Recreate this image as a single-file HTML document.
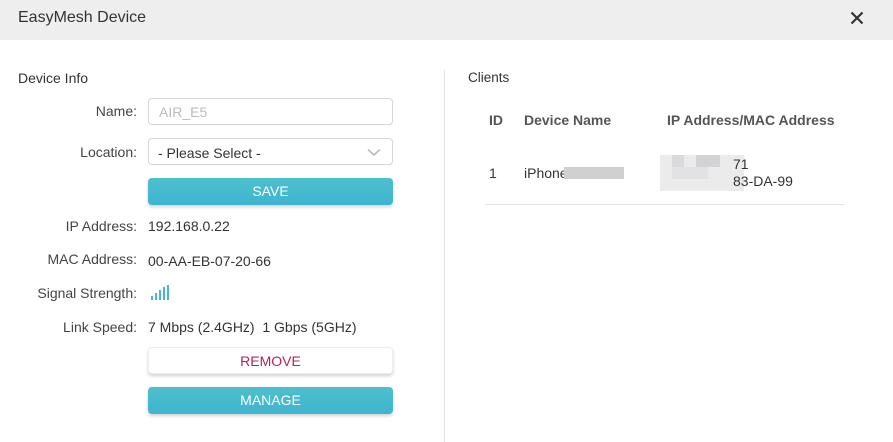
<!DOCTYPE html>
<html><head><meta charset="utf-8"><style>
*{margin:0;padding:0;box-sizing:border-box}
body{width:893px;height:442px;background:#fff;font-family:"Liberation Sans",sans-serif;color:#333;position:relative;overflow:hidden;font-size:14px}
.a{position:absolute;white-space:nowrap}
.hdr{position:absolute;left:0;top:0;width:893px;height:40px;background:#eeeeee}
.lbl{position:absolute;right:756px;text-align:right;color:#444}
.box{position:absolute;left:148px;width:245px;height:27px;border:1px solid #d6d6d6;border-radius:4px;background:#fff}
.btn{position:absolute;left:148px;width:245px;height:27px;border-radius:4px;text-align:center;line-height:27px;font-size:14px;box-shadow:0 2px 3px rgba(0,0,0,.18)}
.teal{background:linear-gradient(#4cc0cc,#40b4cf);color:#fff}
.g{position:absolute;background:#d8d9db}
</style></head><body>
<div class="hdr"></div>
<div class="a" style="left:18px;top:9px;font-size:16px;color:#333">EasyMesh Device</div>
<svg class="a" style="left:850px;top:11px" width="14" height="14" viewBox="0 0 14 14"><path d="M1.5 1.5L12.5 12.5M12.5 1.5L1.5 12.5" stroke="#333" stroke-width="2.2"/></svg>

<div class="a" style="left:18px;top:70px">Device Info</div>
<div class="lbl" style="top:103px">Name:</div>
<div class="box" style="top:98px"><span class="a" style="left:10px;top:5px;color:#bbb">AIR_E5</span></div>
<div class="lbl" style="top:144px">Location:</div>
<div class="box" style="top:138px"><span class="a" style="left:9px;top:6px;color:#333">- Please Select -</span>
<svg class="a" style="left:218px;top:9px" width="14" height="9" viewBox="0 0 14 9"><path d="M1 1.5L7 7L13 1.5" stroke="#bbb" stroke-width="1.6" fill="none"/></svg></div>
<div class="btn teal" style="top:178px">SAVE</div>

<div class="lbl" style="top:218px">IP Address:</div>
<div class="a" style="left:148px;top:218px">192.168.0.22</div>
<div class="lbl" style="top:251px">MAC Address:</div>
<div class="a" style="left:148px;top:253px">00-AA-EB-07-20-66</div>
<div class="lbl" style="top:285px">Signal Strength:</div>
<svg class="a" style="left:151px;top:285px" width="20" height="16" viewBox="0 0 20 16"><g fill="#45b8cb"><rect x="0" y="11" width="2" height="4"/><rect x="4" y="8" width="2" height="7"/><rect x="8" y="5" width="2" height="10"/><rect x="12" y="2" width="2" height="13"/><rect x="16" y="0" width="2" height="15"/></g></svg>
<div class="lbl" style="top:319px">Link Speed:</div>
<div class="a" style="left:148px;top:319px">7 Mbps (2.4GHz)&nbsp; 1 Gbps (5GHz)</div>
<div class="btn" style="top:347px;background:#fff;color:#b5235e;border:1px solid #eee">REMOVE</div>
<div class="btn teal" style="top:387px">MANAGE</div>

<div class="a" style="left:444px;top:70px;width:1px;height:372px;background:#e5e5e5"></div>

<div class="a" style="left:468px;top:70px;font-size:13.5px">Clients</div>
<div class="a" style="left:489px;top:112px;font-weight:bold;color:#555">ID</div>
<div class="a" style="left:524px;top:112px;font-weight:bold;color:#555">Device Name</div>
<div class="a" style="left:667px;top:112px;font-weight:bold;color:#555">IP Address/MAC Address</div>
<div class="a" style="left:489px;top:165px">1</div>
<div class="a" style="left:524px;top:165px">iPhone</div>
<div class="g" style="left:564px;top:167px;width:60px;height:12px;background:#d0d0d2"></div>
<div class="g" style="left:660px;top:155px;width:84px;height:36px;background:#ebebec"></div>
<div class="g" style="left:672px;top:155px;width:12px;height:12px;background:#d8dade"></div>
<div class="g" style="left:696px;top:155px;width:24px;height:12px;background:#d2d3d5"></div>
<div class="g" style="left:672px;top:167px;width:36px;height:12px;background:#e2e2e4"></div>
<div class="a" style="left:733px;top:156px">71</div>
<div class="a" style="left:733px;top:173px">83-DA-99</div>
<div class="a" style="left:486px;top:204px;width:358px;height:1px;background:#e3e3e3"></div>
</body></html>
